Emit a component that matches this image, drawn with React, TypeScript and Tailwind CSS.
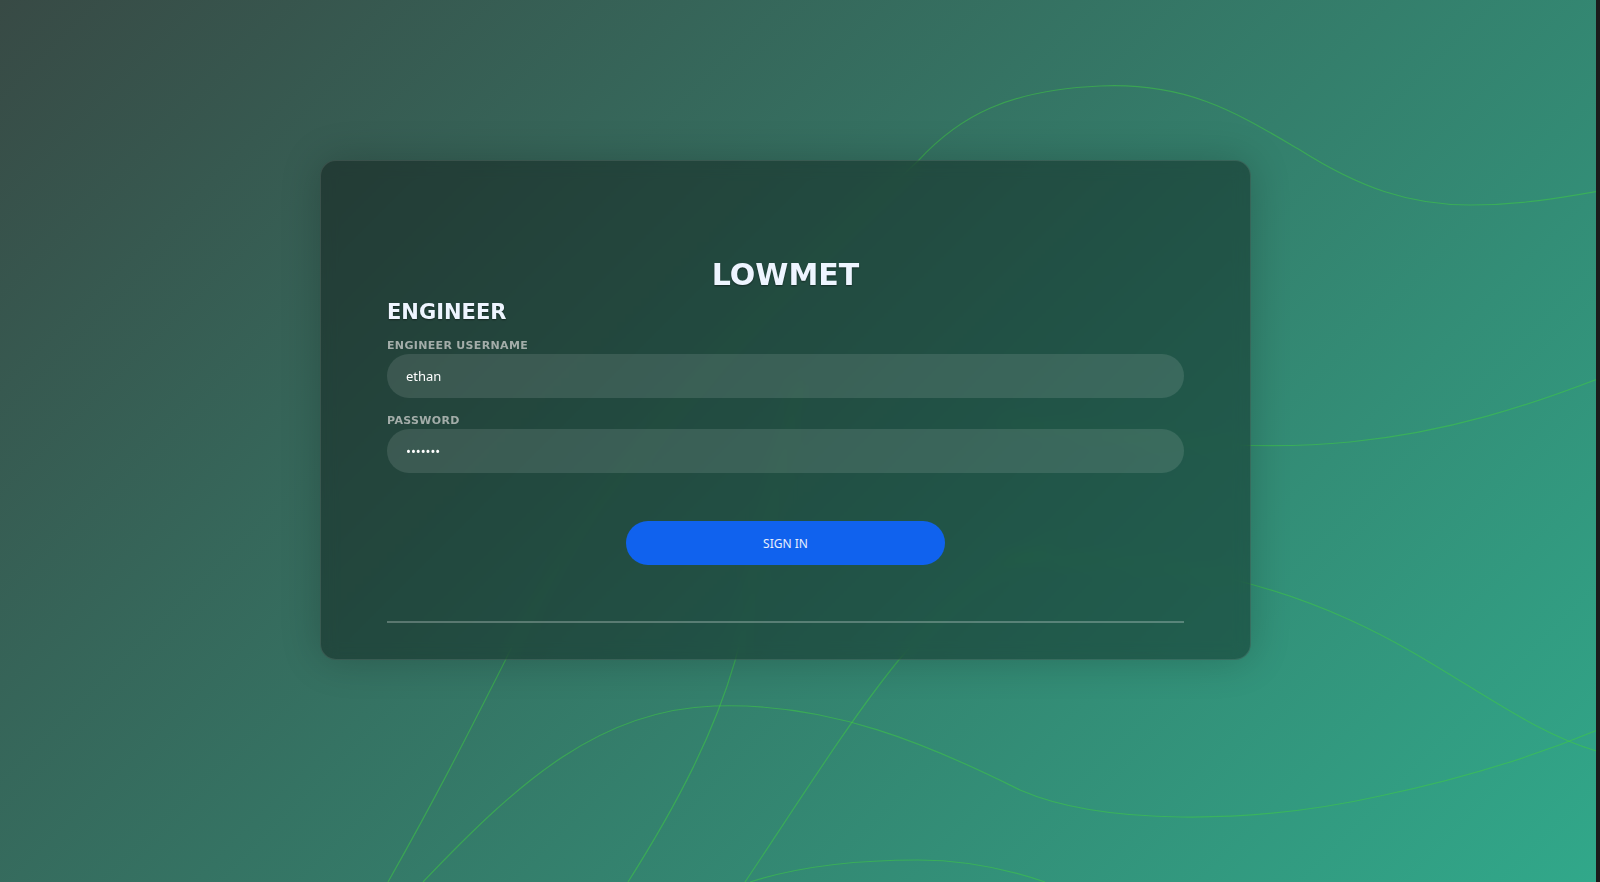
import React from "react";

const lines = [
  "M 388 882 C 440 790, 470 730, 505 661 C 600 460, 800 270, 918 161 C 960 115, 1010 90, 1100 86 C 1190 82, 1240 115, 1300 150 C 1360 188, 1410 205, 1470 205 C 1520 205, 1560 198, 1600 191",
  "M 628 882 C 680 800, 715 730, 735 661 C 760 570, 780 460, 800 380",
  "M 745 882 C 800 800, 850 720, 898 661 C 950 600, 1000 560, 1060 540",
  "M 423 882 C 520 780, 600 710, 714 706 C 830 702, 930 745, 1020 790 C 1100 825, 1250 825, 1380 796 C 1480 775, 1550 750, 1600 729",
  "M 1000 560 C 1150 555, 1250 575, 1350 620 C 1450 665, 1520 730, 1600 752",
  "M 1000 420 C 1120 440, 1250 452, 1350 442 C 1450 432, 1530 405, 1600 378",
  "M 750 882 C 800 866, 860 860, 918 860 C 970 860, 1010 870, 1045 882",
];

export default function App() {
  return (
    <div className="flex w-[1600px] h-[882px] overflow-hidden">
      <div className="relative flex-1 h-full overflow-hidden bg-[linear-gradient(135deg,#384a45_0%,#31a88a_100%)]">
        <svg
          className="absolute inset-0"
          width="1600"
          height="882"
          viewBox="0 0 1600 882"
          fill="none"
        >
          {lines.map((d, i) => (
            <path key={i} d={d} stroke="#40d040" strokeOpacity="0.5" strokeWidth="1.2" />
          ))}
        </svg>
        <div className="relative flex justify-center pt-[160px] pr-[25px]">
          <div className="w-[931px] rounded-2xl border border-white/10 bg-black/35 backdrop-blur-[8px] shadow-[0_0_40px_rgba(0,0,0,0.2)] px-[66px] pt-[96px] pb-[36px] flex flex-col">
            <div className="h-[36px] leading-[36px] text-center text-[30px] font-bold text-[#eef5ff] [font-family:'DejaVu_Sans',sans-serif] [text-shadow:0_1px_2px_rgba(0,0,0,0.45)]">
              LOWMET
            </div>
            <div className="mt-[5px] h-[28px] leading-[28px] text-[21px] font-bold text-[#eef5ff] [font-family:'DejaVu_Sans',sans-serif] [text-shadow:0_1px_2px_rgba(0,0,0,0.45)]">
              ENGINEER
            </div>
            <label className="mt-[13px] h-[14px] leading-[14px] text-[11px] font-bold tracking-[0.03em] text-[#a3ada9] [font-family:'DejaVu_Sans',sans-serif]">
              ENGINEER USERNAME
            </label>
            <input
              className="mt-[1px] h-[44px] w-full rounded-full bg-white/11 px-[19px] text-[13px] text-white outline-none [font-family:'Noto_Sans',sans-serif]"
              defaultValue="ethan"
            />
            <label className="mt-[16px] h-[14px] leading-[14px] text-[11px] font-bold tracking-[0.03em] text-[#a3ada9] [font-family:'DejaVu_Sans',sans-serif]">
              PASSWORD
            </label>
            <input
              type="password"
              className="mt-[1px] h-[44px] w-full rounded-full bg-white/11 px-[19px] text-[13px] text-white outline-none [font-family:'Noto_Sans',sans-serif]"
              defaultValue="1234567"
            />
            <div className="mt-[48px] flex justify-center">
              <button className="h-[44px] w-[319px] rounded-full bg-[#1062ee] pt-[2px] text-[12px] text-[#e8eefc] [font-family:'Noto_Sans',sans-serif]">
                SIGN IN
              </button>
            </div>
            <div className="mt-[56px] h-[2px] w-full bg-white/25" />
          </div>
        </div>
      </div>
      <div className="w-[4px] h-full bg-[#1b1b1b]" />
    </div>
  );
}
